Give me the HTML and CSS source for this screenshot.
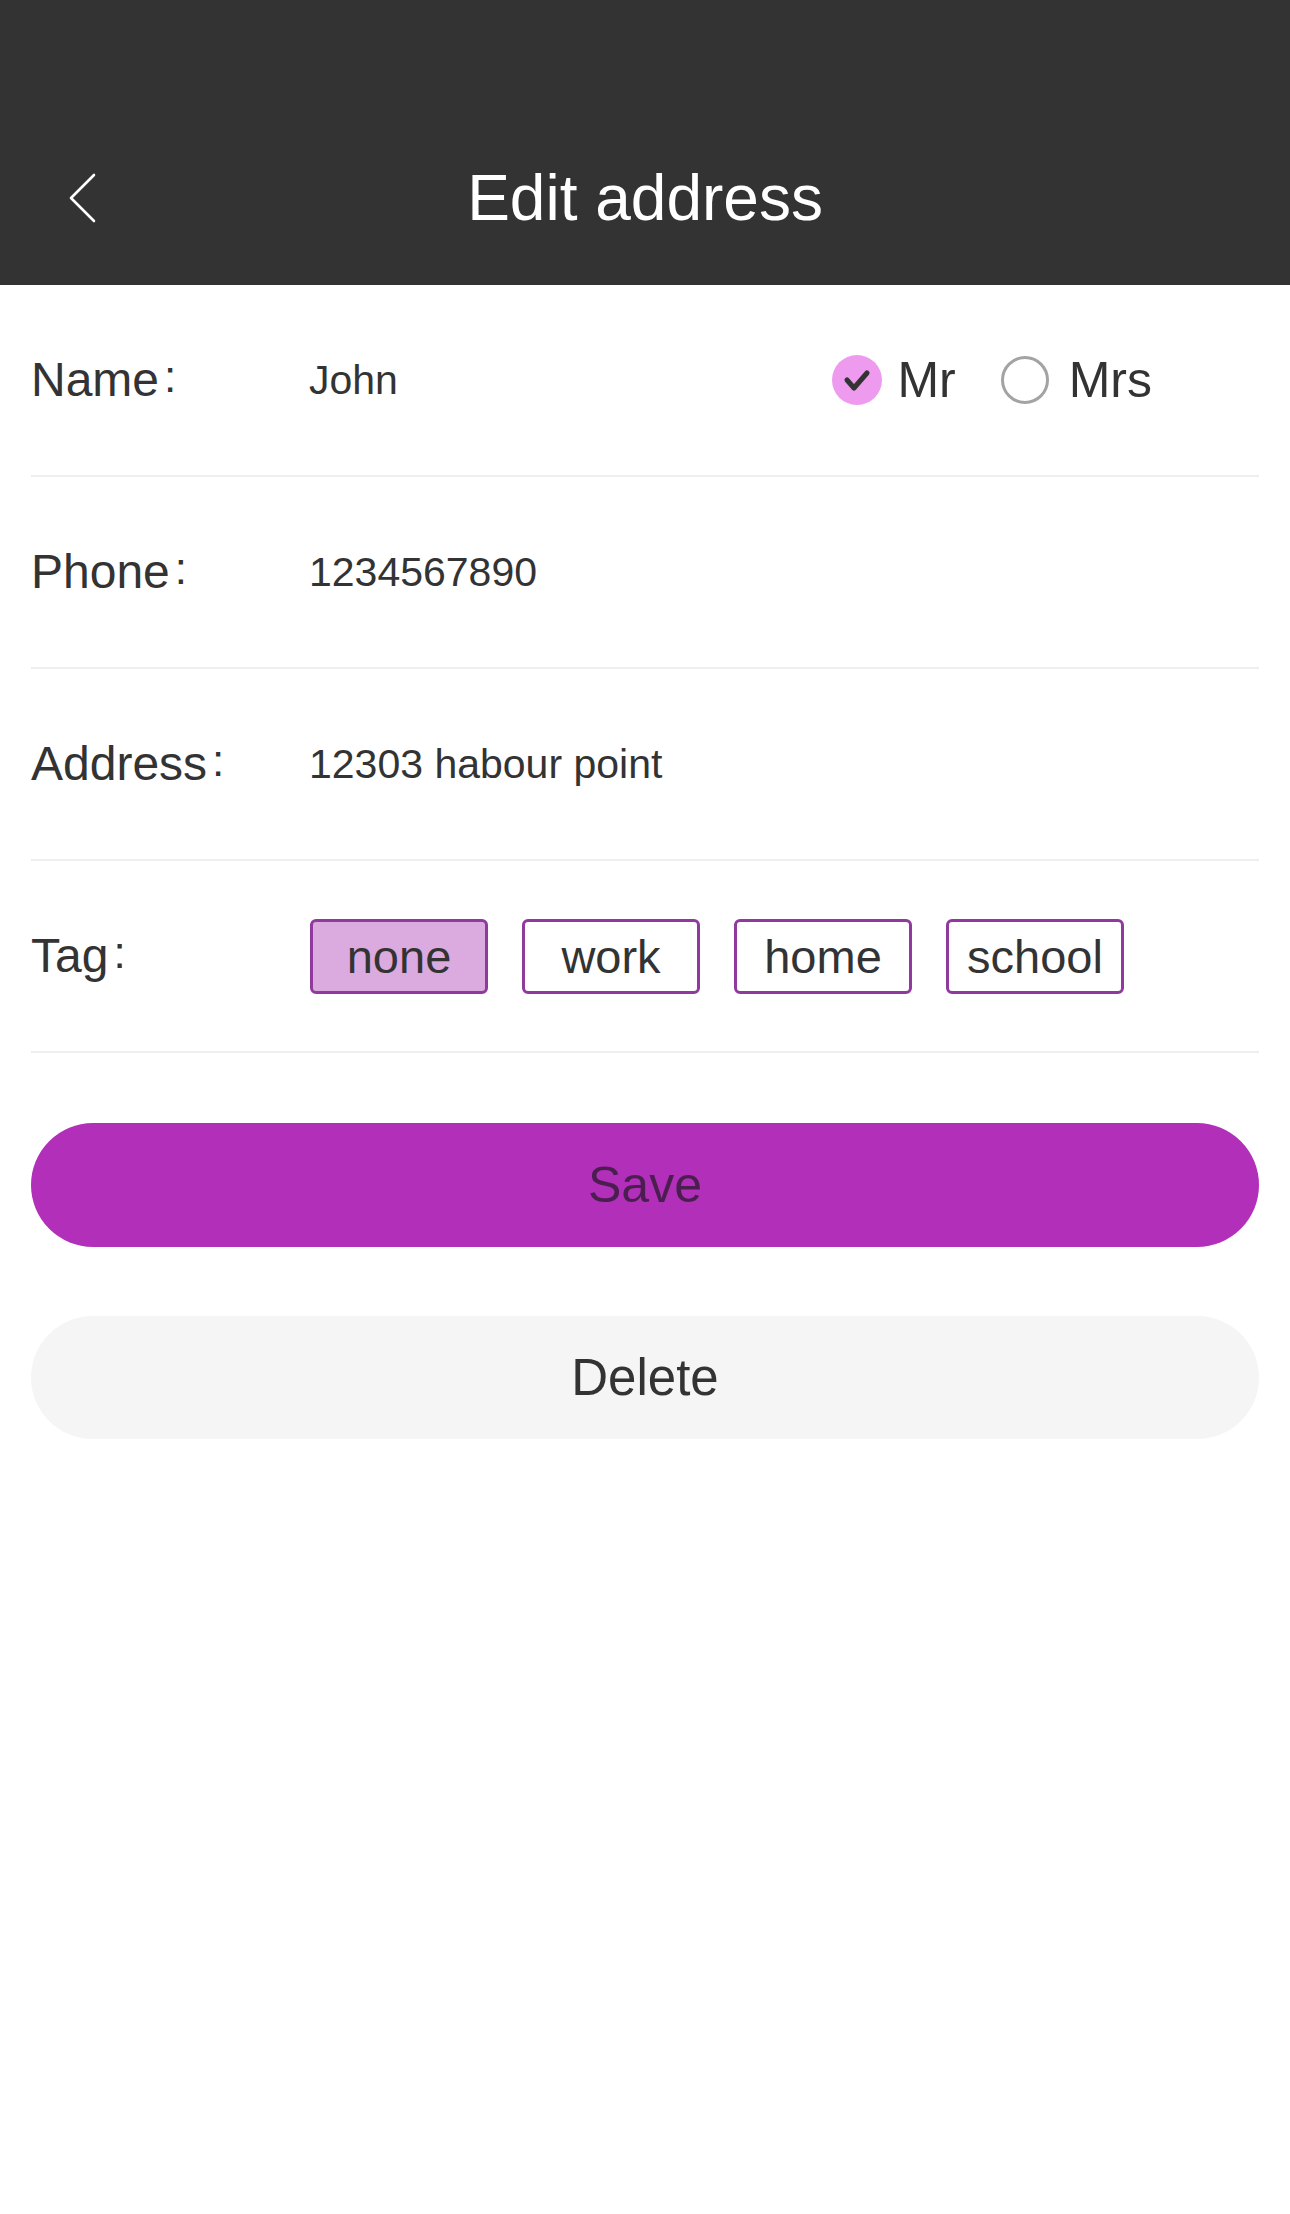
FILE: index.html
```html
<!DOCTYPE html>
<html lang="en">
<head>
<meta charset="utf-8">
<title>Edit address</title>
<link rel="stylesheet" href="styles.css">
</head>
<body>
<header class="topbar">
  <div class="navbar">
    <div class="nav-left">
      <svg class="back" width="30" height="50" viewBox="0 0 30 50" aria-hidden="true">
        <polyline points="26,2 3,25 26,48" fill="none" stroke="#ffffff" stroke-width="2.6" stroke-linecap="round" stroke-linejoin="round"/>
      </svg>
    </div>
    <h1 class="title">Edit address</h1>
    <div class="nav-right"></div>
  </div>
</header>
<main class="form">
  <div class="row">
    <span class="label">Name<span class="colon">:</span></span>
    <span class="value">John</span>
    <div class="gender">
      <span class="radio checked">
        <svg width="50" height="50" viewBox="0 0 50 50" aria-hidden="true">
          <circle cx="25" cy="25" r="25" fill="#ee9aee"/>
          <polyline points="15,25 22,33 35,18" fill="none" stroke="#333333" stroke-width="5" stroke-linecap="round" stroke-linejoin="round"/>
        </svg>
      </span>
      <span class="radio-text">Mr</span>
      <span class="radio">
        <svg width="50" height="50" viewBox="0 0 50 50" aria-hidden="true">
          <circle cx="25" cy="25" r="22.5" fill="#ffffff" stroke="#a3a3a3" stroke-width="3"/>
        </svg>
      </span>
      <span class="radio-text last">Mrs</span>
    </div>
  </div>
  <div class="row">
    <span class="label">Phone<span class="colon">:</span></span>
    <span class="value">1234567890</span>
  </div>
  <div class="row">
    <span class="label">Address<span class="colon">:</span></span>
    <span class="value">12303 habour point</span>
  </div>
  <div class="row">
    <span class="label">Tag<span class="colon">:</span></span>
    <div class="tags">
      <span class="tag active">none</span>
      <span class="tag">work</span>
      <span class="tag">home</span>
      <span class="tag">school</span>
    </div>
  </div>
  <div class="actions">
    <button class="btn save" type="button">Save</button>
    <button class="btn delete" type="button">Delete</button>
  </div>
</main>
</body>
</html>
```

FILE: styles.css
```css
* {
  box-sizing: border-box;
}

html, body {
  margin: 0;
  padding: 0;
  background: #ffffff;
}

body {
  width: 1290px;
  min-height: 2214px;
  font-family: "Liberation Sans", Arial, sans-serif;
  color: #333333;
}

.topbar {
  background: #333333;
  padding-top: 110px;
  height: 285px;
}

.navbar {
  height: 175px;
  display: grid;
  grid-template-columns: 1fr auto 1fr;
  align-items: center;
}

.nav-left {
  padding-left: 68px;
  display: flex;
  align-items: center;
}

.back {
  display: block;
}

.title {
  margin: 0;
  font-weight: normal;
  font-size: 64px;
  color: #ffffff;
  line-height: 1;
}

.form {
  padding: 0 31px;
}

.row {
  height: 192px;
  display: flex;
  align-items: center;
  border-bottom: 2px solid #eeeeee;
}

.label {
  width: 278px;
  flex: none;
  font-size: 48px;
  color: #333333;
  white-space: nowrap;
}

.colon {
  margin-left: 5px;
  vertical-align: 0.1em;
  font-size: 44px;
}

.value {
  flex: 1;
  font-size: 41px;
  color: #333333;
}

.gender {
  display: flex;
  align-items: center;
  margin-right: 107px;
}

.radio {
  width: 50px;
  height: 50px;
  display: block;
}

.radio svg {
  display: block;
}

.radio-text {
  font-size: 50px;
  color: #333333;
  margin-left: 15px;
}

.radio-text.last {
  margin-left: 19px;
}

.radio-text + .radio {
  margin-left: 44px;
}

.tags {
  display: flex;
  gap: 34px;
  margin-left: 1px;
}

.tag {
  width: 178px;
  height: 75px;
  border: 3px solid #8f3a9c;
  border-radius: 6px;
  display: flex;
  align-items: center;
  justify-content: center;
  font-size: 47px;
  color: #333333;
  background: #ffffff;
}

.tag.active {
  background: #dbaadf;
}

.actions {
  padding-top: 70px;
  display: flex;
  flex-direction: column;
  gap: 69px;
}

.btn {
  display: block;
  width: 100%;
  height: 124px;
  border: none;
  border-radius: 62px;
  font-family: "Liberation Sans", Arial, sans-serif;
  font-size: 50px;
  padding: 0;
  cursor: pointer;
}

.btn.save {
  background: #b22fba;
  color: #4a1f50;
}

.btn.delete {
  background: #f5f5f5;
  color: #333333;
  height: 123px;
  font-size: 51px;
}
```
